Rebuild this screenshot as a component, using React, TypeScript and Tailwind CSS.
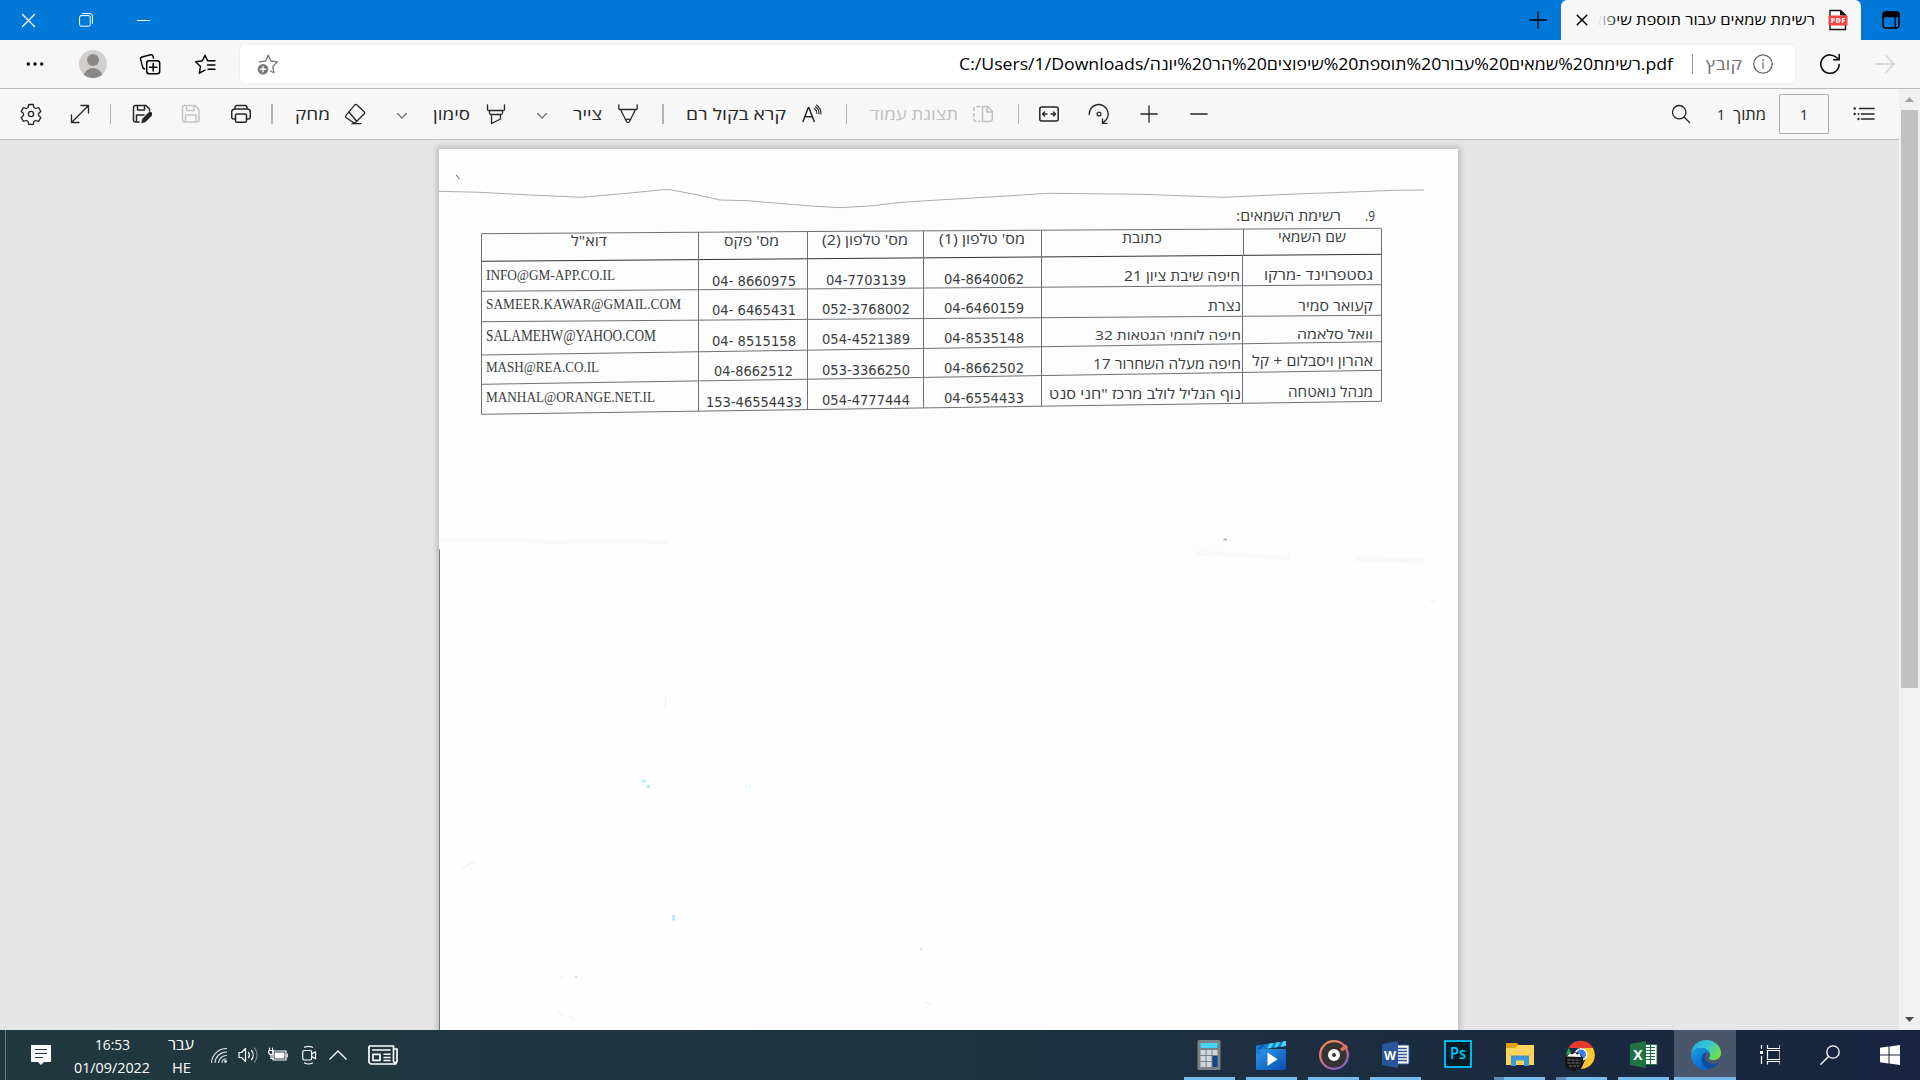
import { useLayoutEffect, useRef, type ReactNode } from 'react'

interface Cell {
  text: string
  box: string
  font?: string
  ltr?: boolean
}

const HEB = "font-['Open_Sans','Liberation_Sans',sans-serif] text-[14.5px]"
const HEB_SMALL = "font-['Open_Sans','Liberation_Sans',sans-serif] text-[13px]"
const NUM = "font-['DejaVu_Sans_Condensed','DejaVu_Sans',sans-serif] text-[14px]"
const MAIL = "font-['Liberation_Serif',serif] text-[15px]"
const MAIL_TALL = "font-['Liberation_Serif',serif] text-[17px]"
const LABEL = "font-['Open_Sans','Liberation_Sans',sans-serif] text-[16px]"

// one entry per printed row, cells go left to right
const rows: { height: string; cells: Cell[] }[] = [
  {
    height: 'h-[35px]',
    cells: [
      { text: 'דוא"ל', box: 'ml-[90px] mt-[5px] w-[36px]' },
      { text: "מס' פקס", box: 'ml-[26px] mt-[5px] w-[55px]' },
      { text: "מס' טלפון (2)", box: 'ml-[15px] mt-[4px] w-[86px]' },
      { text: "מס' טלפון (1)", box: 'ml-[16px] mt-[3px] w-[86px]' },
      { text: 'כתובת', box: 'ml-[81px] mt-[2px] w-[40px]' },
      { text: 'שם השמאי', box: 'ml-[35px] mt-[1px] w-[68px]' },
    ],
  },
  {
    height: 'h-[30px]',
    cells: [
      { text: 'INFO@GM-APP.CO.IL', box: 'ml-[5px] mt-[4px] w-[129px]', font: MAIL, ltr: true },
      { text: '04- 8660975', box: 'ml-[14px] mt-[10px] w-[84px]', font: NUM, ltr: true },
      { text: '04-7703139', box: 'ml-[19px] mt-[9px] w-[80px]', font: NUM, ltr: true },
      { text: '04-8640062', box: 'ml-[21px] mt-[8px] w-[80px]', font: NUM, ltr: true },
      { text: 'חיפה שיבת ציון 21', box: 'ml-[83px] mt-[5px] w-[116px]' },
      { text: 'גסטפרוינד -מרקו', box: 'ml-[21px] mt-[4px] w-[109px]' },
    ],
  },
  {
    height: 'h-[30px]',
    cells: [
      { text: 'SAMEER.KAWAR@GMAIL.COM', box: 'ml-[5px] mt-[3px] w-[195px]', font: MAIL, ltr: true },
      { text: '04- 6465431', box: 'ml-[14px] mt-[9px] w-[84px]', font: NUM, ltr: true },
      { text: '052-3768002', box: 'ml-[15px] mt-[8px] w-[88px]', font: NUM, ltr: true },
      { text: '04-6460159', box: 'ml-[21px] mt-[7px] w-[80px]', font: NUM, ltr: true },
      { text: 'נצרת', box: 'ml-[167px] mt-[5px] w-[33px]' },
      { text: 'קעואר סמיר', box: 'ml-[55px] mt-[5px] w-[75px]' },
    ],
  },
  {
    height: 'h-[30px]',
    cells: [
      { text: 'SALAMEHW@YAHOO.COM', box: 'ml-[5px] mt-[5px] w-[170px]', font: MAIL_TALL, ltr: true },
      { text: '04- 8515158', box: 'ml-[14px] mt-[10px] w-[84px]', font: NUM, ltr: true },
      { text: '054-4521389', box: 'ml-[15px] mt-[8px] w-[88px]', font: NUM, ltr: true },
      { text: '04-8535148', box: 'ml-[21px] mt-[7px] w-[80px]', font: NUM, ltr: true },
      { text: 'חיפה לוחמי הגטאות 32', box: 'ml-[54px] mt-[4px] w-[146px]', font: HEB_SMALL },
      { text: 'וואל סלאמה', box: 'ml-[54px] mt-[3px] w-[76px]', font: HEB_SMALL },
    ],
  },
  {
    height: 'h-[30px]',
    cells: [
      { text: 'MASH@REA.CO.IL', box: 'ml-[5px] mt-[6px] w-[113px]', font: MAIL, ltr: true },
      { text: '04-8662512', box: 'ml-[16px] mt-[10px] w-[79px]', font: NUM, ltr: true },
      { text: '053-3366250', box: 'ml-[15px] mt-[9px] w-[88px]', font: NUM, ltr: true },
      { text: '04-8662502', box: 'ml-[21px] mt-[7px] w-[80px]', font: NUM, ltr: true },
      { text: 'חיפה מעלה השחרור 17', box: 'ml-[52px] mt-[3px] w-[148px]' },
      { text: 'אהרון ויסבלום + קל', box: 'ml-[9px] mt-[0px] w-[121px]' },
    ],
  },
  {
    height: 'h-[30px]',
    cells: [
      { text: 'MANHAL@ORANGE.NET.IL', box: 'ml-[5px] mt-[6px] w-[169px]', font: MAIL, ltr: true },
      { text: '153-46554433', box: 'ml-[8px] mt-[11px] w-[96px]', font: NUM, ltr: true },
      { text: '054-4777444', box: 'ml-[15px] mt-[9px] w-[88px]', font: NUM, ltr: true },
      { text: '04-6554433', box: 'ml-[21px] mt-[7px] w-[80px]', font: NUM, ltr: true },
      { text: 'נוף הגליל לולב מרכז "חני סנט', box: 'ml-[8px] mt-[3px] w-[192px]' },
      { text: 'מנהל נואטחה', box: 'ml-[45px] mt-[1px] w-[85px]' },
    ],
  },
]

// Squeezes or stretches a single line of text to the width of its box
function FitText({ children, className = '', ltr = false }: { children: string; className?: string; ltr?: boolean }) {
  const box = useRef<HTMLDivElement>(null)
  const line = useRef<HTMLSpanElement>(null)

  useLayoutEffect(() => {
    if (!box.current || !line.current) return
    line.current.style.transform = 'none'
    const natural = line.current.getBoundingClientRect().width
    line.current.style.transform = `scaleX(${box.current.clientWidth / natural})`
  }, [children])

  return (
    <div ref={box} dir="ltr" className={`h-5 shrink-0 leading-5 whitespace-nowrap ${className}`}>
      <span ref={line} dir={ltr ? 'ltr' : 'rtl'} className="inline-block origin-left">
        {children}
      </span>
    </div>
  )
}

function Icon({ size = 24, className = '', children }: { size?: number; className?: string; children: ReactNode }) {
  return (
    <svg
      width={size}
      height={size}
      viewBox={`0 0 ${size} ${size}`}
      fill="none"
      stroke="currentColor"
      strokeWidth="1.3"
      strokeLinecap="round"
      strokeLinejoin="round"
      className={`block shrink-0 ${className}`}
    >
      {children}
    </svg>
  )
}

function Slot({ className, children }: { className: string; children: ReactNode }) {
  return <div className={`flex h-full shrink-0 items-center justify-center ${className}`}>{children}</div>
}

function Separator({ className, bar = 'w-px' }: { className: string; bar?: string }) {
  return (
    <Slot className={className}>
      <div className={`h-5 bg-[#b3b3b3] ${bar}`} />
    </Slot>
  )
}

function Chevron() {
  return (
    <Icon size={12} className="mt-1 text-[#666]">
      <path d="M1.5 3.500 6 8l4.500-4.500" strokeWidth="1.1" />
    </Icon>
  )
}

function TitleBar() {
  return (
    <div className="flex h-10 items-center bg-[#0078d7]">
      <Slot className="w-[57px] text-white">
        <Icon size={15}>
          <path d="M1.500 1.500l12 12M13.500 1.500l-12 12" />
        </Icon>
      </Slot>
      <Slot className="w-[58px] text-white">
        <Icon size={14}>
          <rect x=".6" y="2.600" width="10.600" height="10.600" rx="1.500" strokeWidth="1" />
          <path d="M3.500 .6h7.500a2.400 2.400 0 0 1 2.400 2.400v7.500" strokeWidth="1" />
        </Icon>
      </Slot>
      <Slot className="w-[57px] text-white">
        <div className="h-px w-[13px] bg-white" />
      </Slot>
      <div className="flex-1" />
      <Slot className="w-[46px]">
        <Icon size={18}>
          <path d="M9 .8v16.400M.8 9h16.400" />
        </Icon>
      </Slot>
      <div className="flex h-full w-[300px] items-center rounded-t-[6px] bg-[#f7f7f7]">
        <Slot className="ml-[10px] w-[22px]">
          <Icon size={12}>
            <path d="M1.200 1.200l9.600 9.600M10.800 1.200l-9.600 9.600" strokeWidth="1.500" />
          </Icon>
        </Slot>
        <div className="relative ml-[5px] flex h-5 w-[217px] justify-end overflow-hidden">
          <FitText className="w-[222px] font-['Open_Sans','Liberation_Sans',sans-serif] text-[13.5px] text-black">
            רשימת שמאים עבור תוספת שיפוצ
          </FitText>
          <div className="absolute inset-y-0 left-0 w-5 bg-linear-to-r from-[#f7f7f7] to-transparent" />
        </div>
        <svg width="20" height="22" viewBox="0 0 20 22" className="ml-[13px]">
          <path d="M2 20.500V1.500h10.500L17.500 6v14.500z" fill="#fff" stroke="#111" strokeWidth="1.400" />
          <path d="M12.500 1.500V6h5" fill="#111" stroke="#111" />
          <rect x=".5" y="6.500" width="19" height="10" rx="1" fill="#f94144" />
          <text x="10" y="14" textAnchor="middle" fontSize="6.800" fontWeight="800" fill="#fff" fontFamily="Open Sans, sans-serif" textLength="14.500">PDF</text>
        </svg>
      </div>
      <Slot className="w-[59px]">
        <Icon size={18}>
          <rect x="1" y="1" width="16" height="16" rx="3" strokeWidth="1.600" />
          <path d="M1 5.500V4a3 3 0 0 1 3-3h10a3 3 0 0 1 3 3v1.500z" fill="currentColor" />
          <path d="M13.200 6v11" />
        </Icon>
      </Slot>
    </div>
  )
}

function AddressBar() {
  return (
    <div className="flex h-12 items-center bg-[#f7f7f7] text-black">
      <Slot className="w-[70px]">
        <Icon size={18}>
          <g fill="currentColor" stroke="none">
            <circle cx="2.300" cy="9" r="1.700" />
            <circle cx="9" cy="9" r="1.700" />
            <circle cx="15.700" cy="9" r="1.700" />
          </g>
        </Icon>
      </Slot>
      <Slot className="w-[46px]">
        <div className="relative size-7 overflow-hidden rounded-full bg-[#d2d0ce]">
          <div className="absolute top-1 left-2 size-3 rounded-full bg-[#8a8886]" />
          <div className="absolute top-[18px] left-1 size-5 rounded-full bg-[#8a8886]" />
        </div>
      </Slot>
      <Slot className="w-[67px]">
        <Icon size={22}>
          <rect x="7.700" y="7.700" width="13" height="13" rx="2.500" strokeWidth="1.500" />
          <path d="M14.200 10.500v7.400M10.500 14.200h7.400" strokeWidth="1.500" />
          <path d="M14.500 5 14 3.200a2 2 0 0 0-2.400-1.400L3 4A2 2 0 0 0 1.600 6.400l1.900 7A3 3 0 0 0 5.500 16" strokeWidth="1.400" />
        </Icon>
      </Slot>
      <Slot className="w-[43px]">
        <Icon size={22}>
          <path d="M13.500 7.600 11 2.200 8.400 7.800l-6.800 1 4.900 4.800-1.200 6.600 5.700-3" strokeWidth="1.400" />
          <path d="M14 7.700h7M13.500 12h7.500M14 16.300h7" strokeWidth="1.400" />
        </Icon>
      </Slot>
      <div className="ml-[14px] flex h-[38px] w-[1555px] items-center rounded-[5px] bg-white shadow-[0_0_3px_rgba(0,0,0,0.08)]">
        <Slot className="w-14 text-[#767676]">
          <Icon size={22}>
            <path d="M2.500 8.800 8.500 8 11.200 2.200 14 8l6.500.8-4.700 4.600 1.100 6.400-3.400-1.800" strokeWidth="1.300" />
            <circle cx="6" cy="16.300" r="5.300" fill="currentColor" stroke="none" />
            <path d="M6 13.700v5.200M3.400 16.300h5.200" stroke="#fff" strokeWidth="1.400" />
          </Icon>
        </Slot>
        <div className="flex-1" />
        <FitText ltr className={`w-[714px] ${LABEL}`}>
          C:/Users/1/Downloads/רשימת%20שמאים%20עבור%20תוספת%20שיפוצים%20הר%20יונה.pdf
        </FitText>
        <div className="ml-[19px] h-5 w-px bg-[#999]" />
        <FitText className={`ml-[13px] w-[36px] text-[#767676] ${LABEL}`}>קובץ</FitText>
        <Icon size={20} className="mr-[22px] ml-[11px] text-[#6b6b6b]">
          <circle cx="10" cy="10" r="9.200" />
          <path d="M10 9v5.200" />
          <circle cx="10" cy="6" r=".5" fill="currentColor" strokeWidth=".8" />
        </Icon>
      </div>
      <Slot className="w-[70px]">
        <Icon size={22}>
          <path d="M20.200 11.500a9.200 9.200 0 1 1-3-7.200l2.600 2.200" strokeWidth="1.500" />
          <path d="M20.200 1.500v5.200h-5.500" strokeWidth="1.500" />
        </Icon>
      </Slot>
      <Slot className="w-10 text-[#cfcfcf]">
        <Icon size={20}>
          <path d="M.8 10h18.400M10.800 1.600 19.200 10l-8.400 8.400" />
        </Icon>
      </Slot>
    </div>
  )
}

function PdfToolbar() {
  return (
    <div className="flex h-[51px] items-center border-b border-[#b9b9b9] bg-[#f7f7f7] text-[#262626]">
      <Slot className="w-[61px]">
        <Icon size={22}>
          <path d="M8.800 1.500h4.400l.7 3 1.700 1 3-.9 2.200 3.800-2.300 2.100v2l2.300 2.100-2.200 3.800-3-.9-1.700 1-.7 3H8.800l-.7-3-1.700-1-3 .9-2.200-3.800 2.300-2.100v-2L1.200 8.400l2.200-3.800 3 .9 1.700-1z" />
          <circle cx="11" cy="11" r="2.600" />
        </Icon>
      </Slot>
      <Slot className="w-[38px]">
        <Icon size={20}>
          <path d="M1.500 18.500 18.500 1.500M11 1.500h7.500V9M1.500 11v7.500H9" />
        </Icon>
      </Slot>
      <Separator className="w-[23px]" />
      <Slot className="w-[39px]">
        <Icon size={20}>
          <path d="M7 18H3.500a2 2 0 0 1-2-2V3.500a2 2 0 0 1 2-2H14L17.500 5v2M5.500 1.500V6h7V1.500M4.500 18v-7H12" strokeWidth="1.500" />
          <path d="m10 18.500 1-3.500 6-6a1.600 1.600 0 0 1 2.300 2.300l-6 6z" fill="currentColor" />
        </Icon>
      </Slot>
      <Slot className="w-[59px] text-[#c4c4c4]">
        <Icon size={20}>
          <path d="M3.500 18a2 2 0 0 1-2-2V3.500a2 2 0 0 1 2-2H14L18 5.500V16a2 2 0 0 1-2 2zM5.500 1.500V6.500h7.500v-5M4.500 18v-7h10.500v7" strokeWidth="1.500" />
        </Icon>
      </Slot>
      <Slot className="w-[42px]">
        <Icon size={20}>
          <path d="M4 5V3.500a2 2 0 0 1 2-2h8a2 2 0 0 1 2 2V5M4.500 15H2.700A2 2 0 0 1 .7 13V8a3 3 0 0 1 3-3h12.600a3 3 0 0 1 3 3v5a2 2 0 0 1-2 2h-1.800" strokeWidth="1.500" />
          <rect x="4.500" y="10" width="11" height="8.300" rx="1.500" strokeWidth="1.500" />
        </Icon>
      </Slot>
      <Separator className="w-5" bar="w-0.5" />
      <FitText className={`ml-[13px] w-[35px] ${LABEL}`}>מחק</FitText>
      <Slot className="w-[50px]">
        <Icon size={22}>
          <path d="M12.800 1.700 20.300 9a1.200 1.200 0 0 1 0 1.700l-8.800 8.800a1.500 1.500 0 0 1-2.100 0L2 14.500a1.500 1.500 0 0 1 0-2.100L11 1.700a1.200 1.200 0 0 1 1.800 0zM5 9l7.500 9M8 20.700h9" />
        </Icon>
      </Slot>
      <Slot className="w-[44px]">
        <Chevron />
      </Slot>
      <FitText className={`ml-[9px] w-[37px] ${LABEL}`}>סימון</FitText>
      <Slot className="w-[51px]">
        <Icon size={20}>
          <path d="M1.500.8v4.700a1 1 0 0 0 1 1h15a1 1 0 0 0 1-1V.8M3.500 6.500V9a1.500 1.500 0 0 0 1.500 1.500h10A1.500 1.500 0 0 0 16.500 9V6.500M5.500 10.500v9l9-4.500v-4.500" />
        </Icon>
      </Slot>
      <Slot className="w-[42px]">
        <Chevron />
      </Slot>
      <FitText className={`ml-[10px] w-[29px] ${LABEL}`}>צייר</FitText>
      <Slot className="w-[51px]">
        <Icon size={20}>
          <path d="M.8.8v3.700a1 1 0 0 0 1 1h16.400a1 1 0 0 0 1-1V.8M2.500 5.500l6 12a1.700 1.700 0 0 0 3 0l6-12M8 16.300a2.300 2.300 0 0 1 4 0" />
        </Icon>
      </Slot>
      <Separator className="w-5" bar="w-0.5" />
      <FitText className={`ml-[13px] w-[100px] ${LABEL}`}>קרא בקול רם</FitText>
      <Slot className="w-[52px]">
        <Icon size={20}>
          <path d="M1 17.500 6.300 3.500h.6l5.300 14M3 12.800h7.200" strokeWidth="1.500" />
          <path d="M12.500 4.500a6 6 0 0 1 2.500 5M14.500 1a10.500 10.500 0 0 1 4.500 9M13.500 2.800a8 8 0 0 1 3.500 7" strokeWidth="1.100" />
        </Icon>
      </Slot>
      <Separator className="w-[17px]" />
      <FitText className={`ml-[15px] w-[88px] text-[#c0c0c0] ${LABEL}`}>תצוגת עמוד</FitText>
      <Slot className="w-[50px] text-[#c0c0c0]">
        <Icon size={20}>
          <path d="M9.500 2.500h5L19.300 7.500V15a2.500 2.500 0 0 1-2.500 2.500H9.500zM14 2.500V8h5" strokeWidth="1.500" />
          <path d="M7 2.500H3A2.300 2.300 0 0 0 .8 5v10A2.300 2.300 0 0 0 3 17.500h4" strokeDasharray="3 3" strokeWidth="1.500" />
        </Icon>
      </Slot>
      <Separator className="w-[21px]" />
      <Slot className="w-10">
        <Icon size={20}>
          <rect x=".8" y="3" width="18.400" height="14" rx="2" strokeWidth="1.500" />
          <path d="M3.500 10H8M5.500 8l-2 2 2 2M16.500 10H12M14.500 8l2 2-2 2" />
        </Icon>
      </Slot>
      <Slot className="w-[60px]">
        <Icon size={22}>
          <path d="M1.200 11.500a9.500 9.500 0 1 1 14.500 7.600M19 20.300h-4.500v-4.500" />
          <circle cx="11" cy="11" r="1.900" />
        </Icon>
      </Slot>
      <Slot className="w-10">
        <Icon size={18}>
          <path d="M9 .8v16.400M.8 9h16.400" />
        </Icon>
      </Slot>
      <Slot className="w-[60px]">
        <Icon size={18}>
          <path d="M.8 9h16.400" />
        </Icon>
      </Slot>
      <div className="flex-1" />
      <Slot className="w-[72px]">
        <Icon size={20}>
          <circle cx="8.200" cy="8.200" r="6.700" />
          <path d="m13 13 5.500 5.500" />
        </Icon>
      </Slot>
      <FitText className="w-2 font-['Open_Sans',sans-serif] text-[15px]">1</FitText>
      <FitText className="ml-2 w-[33px] font-['Open_Sans','Liberation_Sans',sans-serif] text-[15px]">מתוך</FitText>
      <div className="ml-[13px] flex h-10 w-[50px] items-center justify-center rounded-[2px] border border-[#ababab]">
        <FitText className="w-2 font-['Open_Sans',sans-serif] text-[15px]">1</FitText>
      </div>
      <Slot className="w-[70px]">
        <Icon size={22}>
          <path d="M6.500 5.500h14.500M8.500 11h12.500M8.500 16h12.500" strokeWidth="1.500" />
          <g fill="currentColor" stroke="none">
            <circle cx="1.700" cy="5.500" r="1.200" />
            <circle cx="1.700" cy="11" r="1.200" />
            <circle cx="5.500" cy="11" r="1" />
            <circle cx="5.500" cy="16" r="1.200" />
          </g>
        </Icon>
      </Slot>
    </div>
  )
}

// Rules of the printed form, slightly skewed by the scanner, plus the torn paper edge and dust
function ScanMarks() {
  return (
    <svg className="absolute top-0 left-0" width="1019" height="881" viewBox="439 149 1019 881" fill="none">
      <path d="M439 191 582 197 665 190 720 200 840 208 1049 193 1223 197 1424 190V562L1300 559 1190 553 1050 545H439z" fill="#fdfdfd" />
      <path d="M439 540h80l30 2 60-1 60 1" stroke="#f8f8f8" strokeWidth="5" />
      <path d="M1195 553 1290 558M1355 559 1424 561" stroke="#f9f9f9" strokeWidth="5" />
      <path
        d="M439 191.300 480 192.300 530 195 582 197.300 630 193 663 189.700H670L697 194.700 720 200 747 200.700 807 205.700 840 207.700 873 205.700 897 202.700 930 200.500 968 198.300 1049 193.300 1143 194.300 1223 197.300 1295 194 1343 192.300 1395 190.300 1424 190"
        stroke="#a9adb4"
        strokeWidth="1"
      />
      <g stroke="#6d7176" strokeWidth="1">
        <path d="M481.500 233.700 810 231.500 1381 228.300" />
        <path d="M481.500 261.300 1381 254.300" stroke="#303336" />
        <path d="M481.500 291.300 1381 284.700" />
        <path d="M481.500 321.700 1381 315.300" />
        <path d="M481.500 355 1381 341.700" />
        <path d="M481.500 384.300 1381 370.300" />
        <path d="M481.500 414.300 1381 401.300" />
        <path d="M481.500 233.500V414.300M698.500 232V411M807.500 231.500V409.500M923.500 231V408M1041.500 230.500V406M1243.500 229V255L1242.500 256V403.500M1381.500 228.300V401.500" />
      </g>
      <path d="m456 175 3.500 4" stroke="#555" />
      <path d="M439.500 549.500V1030" stroke="#777" />
      <path d="M1223.500 539.500h3.500" stroke="#aaa" strokeWidth="1.500" />
      <path d="M642 781h3.500M647 786.500h3" stroke="#a4f3fa" strokeWidth="3" />
      <path d="M672 924h3v-8" stroke="none" />
      <path d="M673.500 915v5.500" stroke="#b5e4fa" strokeWidth="2.500" />
      <path d="M745 786.500h2M749 786.500h2" stroke="#cdf5f8" strokeWidth="2" />
      <path d="M920 949h2M575 977h2.500" stroke="#dde4e6" strokeWidth="2" />
      <path d="M665 708q2-6 0-11M475 678v4M511 696h4M559 980l4-4M558 1012l5 3M569 1016l6 4M1430 600l6 3M925 1002l7 2M1097 406l3 2M1040 719l3 3M462 868l14-7" stroke="#efefef" />
    </svg>
  )
}

function PdfPage() {
  return (
    <div className="relative h-[881px] w-[1019px] shrink-0 bg-[#fefefe] text-[#3a3d40] shadow-[0_0_6px_2px_rgba(0,0,0,0.2)]">
      <ScanMarks />
      <div className="relative flex h-[77px] items-end">
        <FitText className={`ml-[797px] w-[105px] ${HEB}`}>רשימת השמאים:</FitText>
        <FitText className={`ml-[24px] w-[10px] ${HEB}`}>9.</FitText>
      </div>
      <div className="relative ml-[42px]">
        {rows.map((row, i) => (
          <div key={i} className={`grid grid-cols-[217px_109px_116px_118px_202px_138px] ${row.height}`}>
            {row.cells.map((cell) => (
              <FitText key={cell.text} ltr={cell.ltr} className={`${cell.font ?? HEB} ${cell.box}`}>
                {cell.text}
              </FitText>
            ))}
          </div>
        ))}
      </div>
    </div>
  )
}

function Scrollbar() {
  return (
    <div className="flex w-[21px] shrink-0 flex-col items-center bg-[#f1f1f1]">
      <div className="flex h-[21px] items-center">
        <svg width="9" height="5" viewBox="0 0 9 5">
          <path d="M0 5 4.500 0 9 5z" fill="#a3a3a3" />
        </svg>
      </div>
      <div className="h-[578px] w-[17px] bg-[#c1c1c1]" />
      <div className="flex-1" />
      <div className="flex h-[21px] items-center">
        <svg width="9" height="5" viewBox="0 0 9 5">
          <path d="M0 0 4.500 5 9 0z" fill="#505050" />
        </svg>
      </div>
    </div>
  )
}

function TaskApp({ bar = 'bg-[#76b9ed]', active = false, children }: { bar?: string; active?: boolean; children: ReactNode }) {
  return (
    <div className={`relative flex h-full w-[62px] shrink-0 items-center justify-center ${active ? 'bg-[#4a566b]' : ''}`}>
      {children}
      <div className={`absolute bottom-0 h-[3px] ${active ? 'w-full' : 'w-[51px]'} ${bar}`} />
    </div>
  )
}

function Taskbar() {
  return (
    <div className="flex h-[50px] items-center bg-linear-to-r from-[#22383f] via-[#1f3340] to-[#182440] text-white">
      <div className="ml-[5px] h-full w-px bg-[#6d7d83]" />
      <Slot className="w-[70px]">
        <svg width="20" height="20" viewBox="0 0 20 20">
          <path d="M0 0h20v17h-7l-3 3-3-3H0z" fill="#fff" />
          <path d="M4 4.500h12M4 8.500h12M4 12.500h8" stroke="#22383f" strokeWidth="1.200" />
        </svg>
      </Slot>
      <div className="ml-[-2px] flex w-[76px] flex-col items-center font-['Open_Sans',sans-serif] text-[15px]">
        <FitText className="mb-[3px] w-[35px]">16:53</FitText>
        <FitText ltr className="w-[76px]">01/09/2022</FitText>
      </div>
      <div className="ml-[18px] flex w-[26px] flex-col items-center font-['Open_Sans','Liberation_Sans',sans-serif] text-[15px]">
        <FitText className="mb-[3px] w-[26px]">עבר</FitText>
        <FitText ltr className="w-[19px]">HE</FitText>
      </div>
      <Slot className="ml-[10px] w-[29px]">
        <Icon size={18} className="text-[#e5e8ea]">
          <path d="M1.500 16.500a15 15 0 0 1 15-14M5 16.500a11.500 11.500 0 0 1 11.500-10.500M8.500 16.500a8 8 0 0 1 8-7M12 16.500a4.500 4.500 0 0 1 4-3.800" strokeWidth="1.100" />
          <circle cx="15.500" cy="15.500" r="1.400" fill="currentColor" stroke="none" />
        </Icon>
      </Slot>
      <Slot className="w-[29px]">
        <Icon size={20}>
          <path d="M1 7.500h2.500L7.500 3.500v13l-4-4H1z" strokeWidth="1.200" />
          <path d="M10.500 7.500a4 4 0 0 1 0 5M13.500 5.500a7 7 0 0 1 0 9" strokeWidth="1.200" />
          <path d="M16.500 3a11 11 0 0 1 0 14" strokeWidth="1.200" opacity=".4" />
        </Icon>
      </Slot>
      <Slot className="w-[31px]">
        <Icon size={20}>
          <rect x="5" y="6" width="13" height="9" strokeWidth="1.200" />
          <rect x="6.500" y="7.500" width="10" height="6" fill="currentColor" stroke="none" />
          <path d="M19.200 9v3M1.500 3v2.500M4.500 3v2.500M.8 5.500h4.400v2a2 2 0 0 1-4.400 0zM3 9.500v4h2" strokeWidth="1.200" />
        </Icon>
      </Slot>
      <Slot className="w-[31px]">
        <Icon size={20}>
          <rect x="3.700" y="5.500" width="9" height="9.500" rx="1.500" strokeWidth="1.200" />
          <path d="m12.700 9 3.800-2.200v7l-3.800-2.200M5.500 2.300a9 9 0 0 1 8 0M5.500 18a9 9 0 0 0 8 0" strokeWidth="1.200" />
        </Icon>
      </Slot>
      <Slot className="w-[28px]">
        <Icon size={18}>
          <path d="m1 13 8-8 8 8" strokeWidth="1.400" />
        </Icon>
      </Slot>
      <Slot className="ml-[13px] w-[35px]">
        <svg width="30" height="20" viewBox="0 0 30 20" fill="none" stroke="#fff" strokeWidth="1.700">
          <path d="M1 1h24.500v15.500a2 2 0 0 0 3.500 0V4h-3.500M1 1v15.500a2.500 2.500 0 0 0 2.500 2.500H26.500a2 2 0 0 0 2-2" />
          <path d="M4 5h18.500M15.500 9.300h7M15.500 12.500h7M15.500 15.500h7" strokeWidth="1.500" />
          <path d="M5 9.300h7v6H5z" />
        </svg>
      </Slot>
      <div className="flex-1" />
      <TaskApp>
        <svg width="24" height="30" viewBox="0 0 24 30">
          <rect x=".5" y="0" width="23" height="30" rx="1.500" fill="#7d8286" />
          <rect x="3.500" y="3" width="17" height="5" fill="#45d4f5" />
          <path d="M3.500 10h5v5h-5zM9.500 10h5v5h-5zM15.500 10h5v5h-5zM3.500 16h5v5h-5zM9.500 16h5v5h-5zM3.500 22h5v5h-5zM9.500 22h5v5h-5z" fill="#d2d7db" />
          <path d="M15.500 16h5v11h-5z" fill="#11478f" />
        </svg>
      </TaskApp>
      <TaskApp>
        <svg width="30" height="30" viewBox="0 0 30 30">
          <defs>
            <linearGradient id="film" x1="0" y1="0" x2="1" y2="1">
              <stop offset="0" stopColor="#2b9be8" />
              <stop offset="1" stopColor="#0c4eb4" />
            </linearGradient>
          </defs>
          <path d="M0 9h30v19.500A1.500 1.500 0 0 1 28.500 30h-27A1.500 1.500 0 0 1 0 28.500z" fill="url(#film)" />
          <path d="M0 5.500 29 1.200a1 1 0 0 1 1 1V6L5 9.500 4 14H0z" fill="#1180d6" />
          <path d="m13.500 3.500 4-.6L15 8l-4 .6zM20.500 2.500l3.500-.5-2.500 5-3.500.5zM27 1.500l3-.4V6l-5.500.8z" fill="#45d8fa" />
          <path d="M5 4.800 9 4.200 6 9H1.500z" fill="#0a5bb5" />
          <path d="m11.500 12.500 10 6.700-10 6.700z" fill="#fff" />
        </svg>
      </TaskApp>
      <TaskApp>
        <svg width="30" height="30" viewBox="0 0 30 30" className="ml-0.5">
          <defs>
            <linearGradient id="groove" x1="0" y1="0" x2="0.600" y2="1">
              <stop offset="0" stopColor="#ff9a3c" />
              <stop offset=".6" stopColor="#d0688c" />
              <stop offset="1" stopColor="#8b62d0" />
            </linearGradient>
          </defs>
          <circle cx="15" cy="15" r="15" fill="url(#groove)" />
          <circle cx="15" cy="15" r="12.700" fill="#333" />
          <path d="M22 10 28 6" stroke="#e0735f" strokeWidth="3.500" />
          <circle cx="15" cy="15" r="4" fill="none" stroke="#fff" strokeWidth="4" />
        </svg>
      </TaskApp>
      <TaskApp>
        <svg width="28" height="28" viewBox="0 0 28 28" className="ml-0.5">
          <path d="M15 4h12v19H15z" fill="#fff" stroke="#2a5699" />
          <path d="M16 7.500h9M16 10.500h9M16 13.500h9M16 16.500h9M16 19.500h9" stroke="#2a5699" strokeWidth="1.300" />
          <path d="M0 3 16 0v27L0 24z" fill="#2a5699" />
          <text x="8" y="18.500" textAnchor="middle" fontSize="13" fontWeight="700" fill="#fff" fontFamily="Open Sans, sans-serif" textLength="12" lengthAdjust="spacingAndGlyphs">W</text>
        </svg>
      </TaskApp>
      <TaskApp bar="bg-transparent">
        <svg width="28" height="28" viewBox="0 0 28 28" className="-mt-0.5 ml-0.5">
          <rect x="1" y="1" width="26" height="26" fill="#001d26" stroke="#00c8ff" strokeWidth="1.800" />
          <text x="14" y="19" textAnchor="middle" fontSize="16" fontWeight="600" fill="#00c8ff" fontFamily="Open Sans, sans-serif" textLength="16" lengthAdjust="spacingAndGlyphs">Ps</text>
        </svg>
      </TaskApp>
      <TaskApp bar="bg-linear-to-r from-[#5a8bb3] from-20% to-[#76b9ed] to-20%">
        <svg width="28" height="24" viewBox="0 0 28 24" className="ml-0.5">
          <path d="M0 0h11l2.500 3H27v5H0z" fill="#e0a100" />
          <path d="M0 5h9l3-3h16v20H0z" fill="#ffd35c" />
          <path d="M5 12.500h18V23h-5v-5.500h-8V23H5z" fill="#3f97db" />
        </svg>
      </TaskApp>
      <TaskApp bar="bg-linear-to-r from-[#5a8bb3] from-20% to-[#76b9ed] to-20%">
        <svg width="32" height="31" viewBox="0 0 32 31" className="-ml-0.5">
          <path d="M4.500 8A14 14 0 0 1 29 8H17z" fill="#e33b2e" />
          <path d="M29 8a14 14 0 0 1-12 21l6-13-4-8z" fill="#fdc52c" />
          <path d="M4.500 8 11 18l6 11A14 14 0 0 1 4.500 8z" fill="#2ba24c" />
          <circle cx="17" cy="14.500" r="6.500" fill="#fff" />
          <circle cx="17" cy="14.500" r="5" fill="#3b7ded" />
          <circle cx="10" cy="21.500" r="9.500" fill="#161616" />
          <path d="M3 16.500 6 13l2 1.500L11 12.500l2 2 2.500-1L17 17z" fill="#f5f5f5" />
          <path d="M3.500 20h13M3.500 23h13M5 26h10" stroke="#555" strokeWidth="1.500" strokeDasharray="3 1" />
        </svg>
      </TaskApp>
      <TaskApp>
        <svg width="28" height="28" viewBox="0 0 28 28" className="ml-0.5">
          <path d="M15 3.500h12v20H15z" fill="#fff" stroke="#207245" />
          <path d="M16 6.500h9M16 9.500h9M16 12.500h9M16 15.500h9M16 18.500h9M20.500 4v19" stroke="#207245" strokeWidth="1.200" />
          <path d="M0 3 16 0v27L0 24z" fill="#207245" />
          <text x="8" y="18.500" textAnchor="middle" fontSize="14" fontWeight="700" fill="#fff" fontFamily="Open Sans, sans-serif">X</text>
        </svg>
      </TaskApp>
      <TaskApp active>
        <svg width="30" height="30" viewBox="0 0 30 30" className="ml-0.5">
          <defs>
            <linearGradient id="edgeTop" x1="0" y1="0" x2="1" y2=".4">
              <stop offset="0" stopColor="#2aa5dc" />
              <stop offset=".6" stopColor="#33c8d8" />
              <stop offset="1" stopColor="#6cdf4e" />
            </linearGradient>
            <linearGradient id="edgeLeft" x1="0" y1="0" x2=".6" y2="1">
              <stop offset="0" stopColor="#1b9de2" />
              <stop offset="1" stopColor="#0a66cc" />
            </linearGradient>
          </defs>
          <path d="M0 14A15 15 0 0 1 15 0c9 0 15 6.500 15 13 0 4.500-3.500 7-7.500 7-3 0-5-1-4.500-2.200 1-1.300 1.200-2 1-3.300C18.500 11 15 8 10 8 5 8 1 11 0 14z" fill="url(#edgeTop)" />
          <path d="M0 14.500C.8 10.500 5 8 10 8c4.500 0 8 2.500 9 5.500-3-2.500-8 1-8 6C11 25 15 29 19 29.300A15 15 0 0 1 0 14.500z" fill="url(#edgeLeft)" />
          <path d="M14 12.500c-5 3.500-4.500 12 1.500 15.500 5 2 9.500-.5 12.500-5.500-4 2.500-13 1.500-14-5-.2-2 .5-3.700 2-5z" fill="#0b4f9e" />
        </svg>
      </TaskApp>
      <Slot className="w-[68px]">
        <svg width="20" height="20" viewBox="0 0 20 20" fill="none" stroke="#fff" strokeWidth="1.200">
          <path d="M1.500 0v4M1.500 11v8M7.500 0v3.500H20V0M7.500 5.500H20v9H7.500zM7.500 19.500v-3H20v3" />
          <path d="M0 6h3v3H0z" fill="#fff" stroke="none" />
        </svg>
      </Slot>
      <Slot className="w-[51px]">
        <Icon size={20}>
          <circle cx="13" cy="7" r="6.200" />
          <path d="M8.500 11.500.8 19.200" />
        </Icon>
      </Slot>
      <Slot className="w-[65px] pl-[5px]">
        <svg width="20" height="20" viewBox="0 0 20 20" fill="#fff">
          <path d="M0 2.800 8.500 1.600V9.500H0zM9.500 1.400 20 0v9.500H9.500zM0 10.500h8.500v7.900L0 17.200zM9.500 10.500H20V20L9.500 18.600z" />
        </svg>
      </Slot>
    </div>
  )
}

export default function App() {
  return (
    <div className="flex h-[1080px] w-[1920px] flex-col overflow-hidden">
      <TitleBar />
      <AddressBar />
      <div className="flex min-h-0 flex-1 border-t border-[#b9b9b9]">
        <div className="flex w-[1899px] flex-col">
          <PdfToolbar />
          <div className="flex min-h-0 flex-1 overflow-hidden bg-[#e6e6e6] pt-[9px] pl-[439px]">
            <PdfPage />
          </div>
        </div>
        <Scrollbar />
      </div>
      <Taskbar />
    </div>
  )
}
